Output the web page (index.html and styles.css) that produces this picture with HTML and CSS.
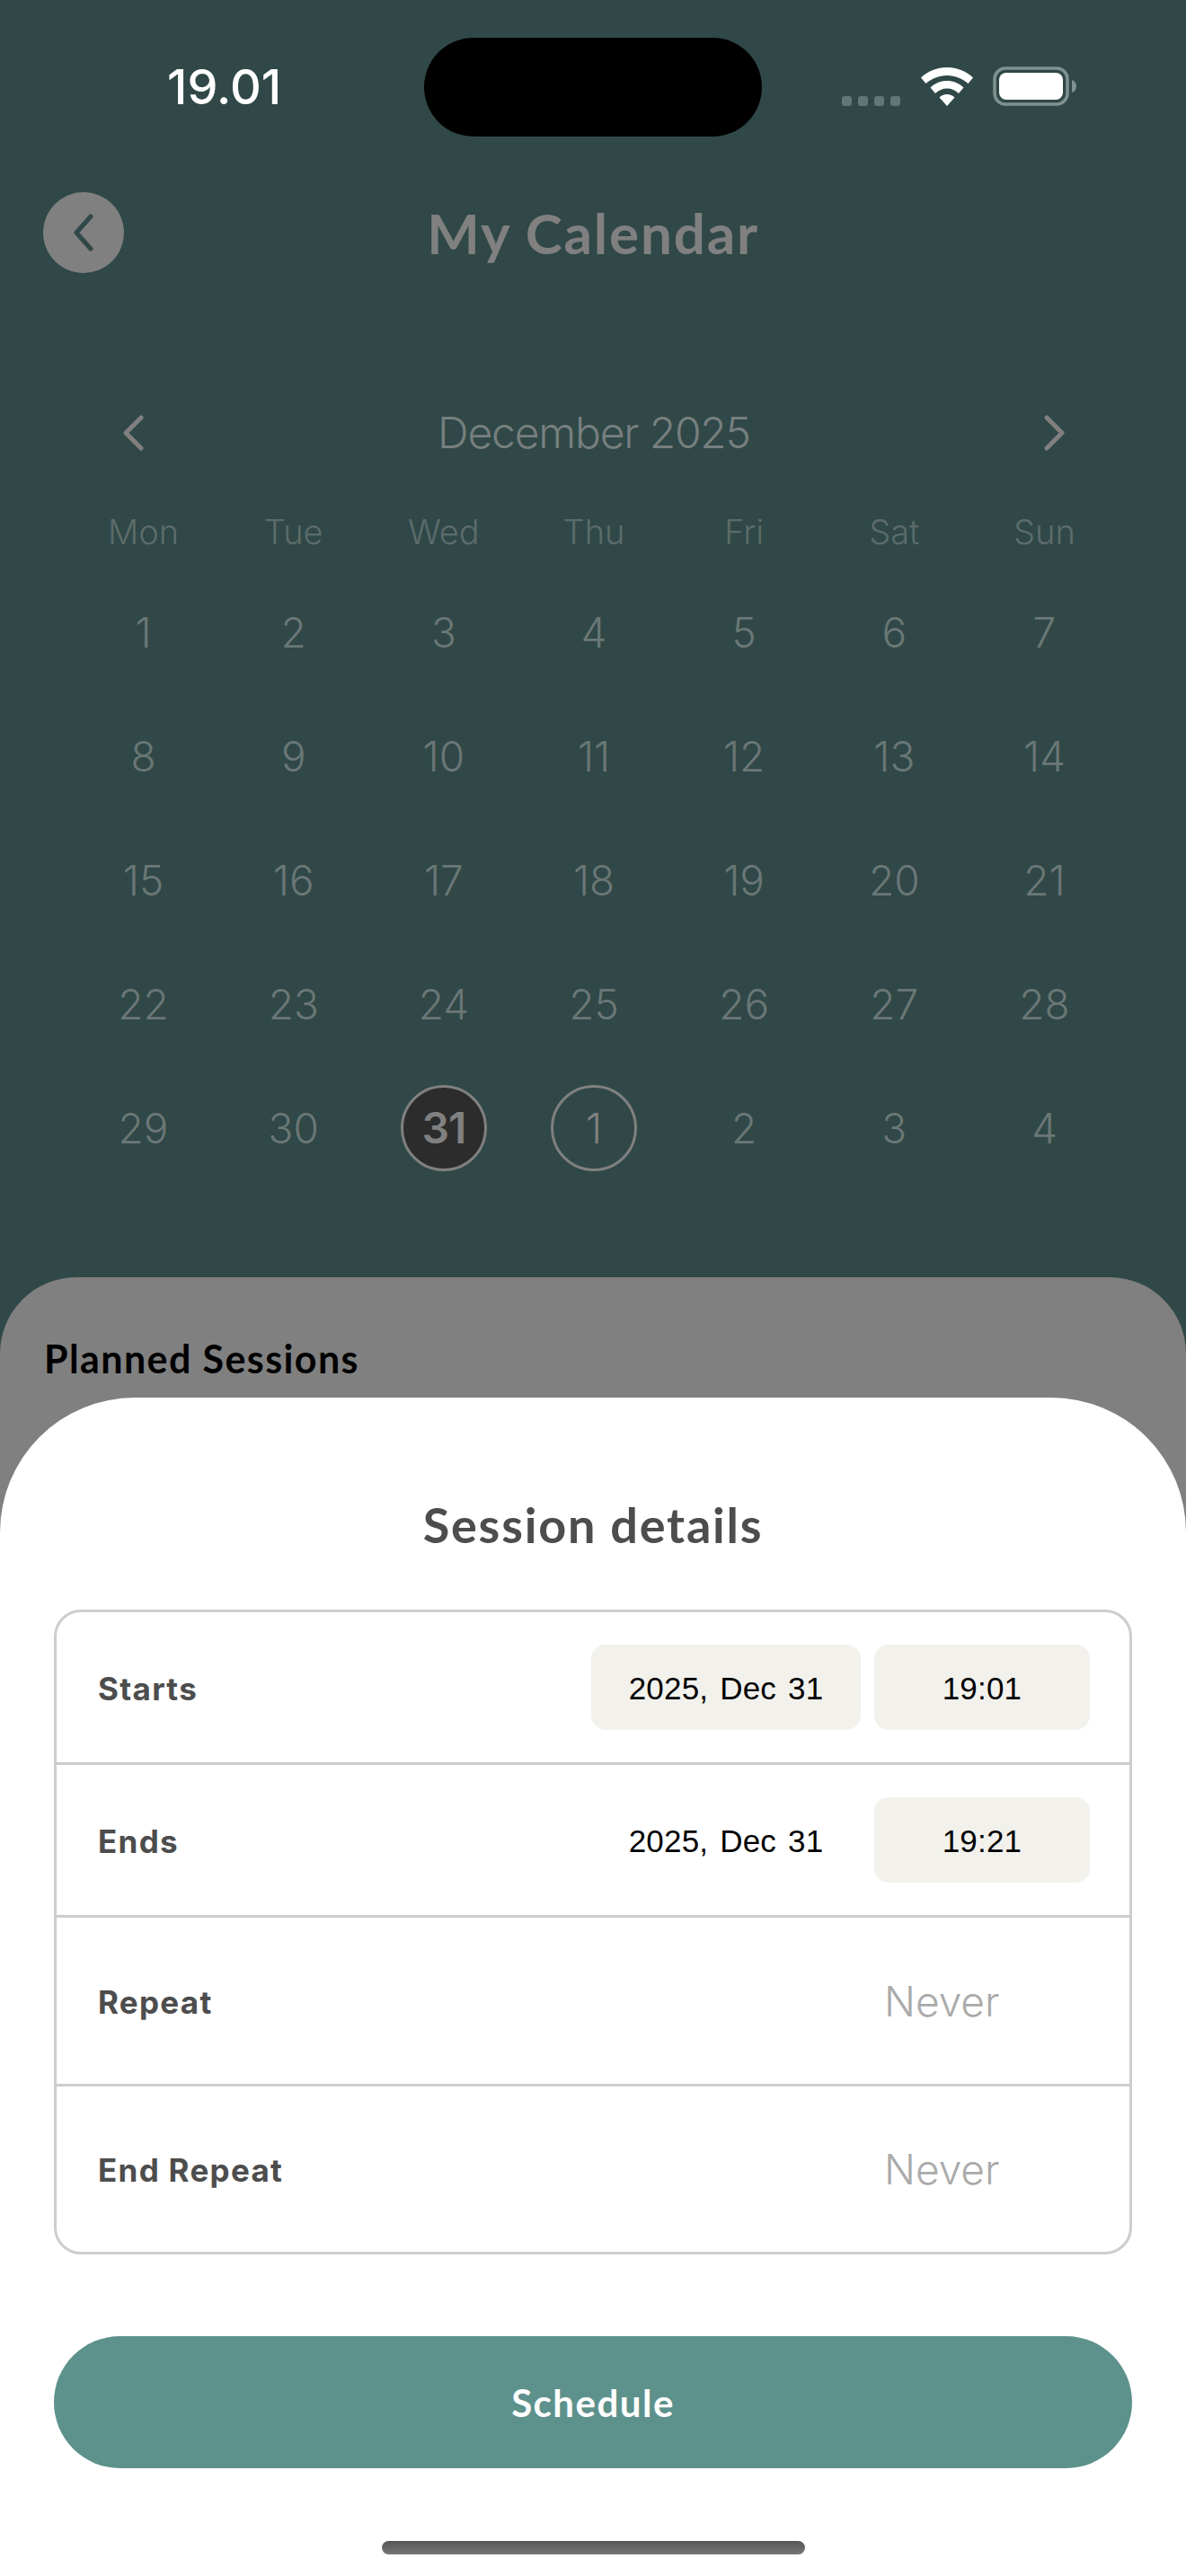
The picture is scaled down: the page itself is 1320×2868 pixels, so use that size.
FILE: index.html
```html
<!DOCTYPE html>
<html lang="en">
<head>
<meta charset="utf-8">
<title>My Calendar</title>
<link rel="stylesheet" href="styles.css">
</head>
<body>
<div class="screen">
  <div class="status">
    <div class="time">19.01</div>
    <div class="island"></div>
    <div class="indicators">
      <div class="signal"><i></i><i></i><i></i><i></i></div>
      <svg class="wifi" width="58" height="43" viewBox="0 0 58 43"><path fill="#fff" d="M29 0C18 0 8 4 0 11.500L5.500 18C12 12.500 20 9 29 9C38 9 46 12.500 52.500 18L58 11.500C50 4 40 0 29 0Z"/><path fill="#fff" d="M29 15C22 15 15.500 17.500 10.500 22.500L16 29C19.500 25.500 24 23.500 29 23.500C34 23.500 38.500 25.500 42 29L47.500 22.500C42.500 17.500 36 15 29 15Z"/><path fill="#fff" d="M29 30C25.500 30 22.500 31.200 20.500 33.500L29 43L37.500 33.500C35.500 31.200 32.500 30 29 30Z"/></svg>
      <svg class="battery" width="94" height="44" viewBox="0 0 94 44"><rect x="2" y="2" width="81" height="40" rx="12" fill="none" stroke="#7f9290" stroke-width="3.500"/><rect x="7" y="7" width="71" height="30" rx="8" fill="#fff"/><path fill="#7f9290" d="M88 15C91 16 93 18.500 93 22C93 25.500 91 28 88 29Z"/></svg>
    </div>
  </div>

  <header class="header">
    <div class="back">
      <svg width="26" height="42" viewBox="0 0 26 42"><path d="M21 3L5 21L21 39" fill="none" stroke="#304847" stroke-width="5" stroke-linecap="round" stroke-linejoin="round"/></svg>
    </div>
    <h1 class="title">My Calendar</h1>
  </header>

  <section class="calendar">
    <div class="month">
      <svg width="26" height="40" viewBox="0 0 26 40"><path d="M22 3L5 20L22 37" fill="none" stroke="#808080" stroke-width="5" stroke-linecap="round" stroke-linejoin="round"/></svg>
      <div class="month-name">December 2025</div>
      <svg width="26" height="40" viewBox="0 0 26 40"><path d="M4 3L21 20L4 37" fill="none" stroke="#808080" stroke-width="5" stroke-linecap="round" stroke-linejoin="round"/></svg>
    </div>
    <div class="weekdays">
      <span>Mon</span><span>Tue</span><span>Wed</span><span>Thu</span><span>Fri</span><span>Sat</span><span>Sun</span>
    </div>
    <div class="days">
      <span>1</span><span>2</span><span>3</span><span>4</span><span>5</span><span>6</span><span>7</span>
      <span>8</span><span>9</span><span>10</span><span>11</span><span>12</span><span>13</span><span>14</span>
      <span>15</span><span>16</span><span>17</span><span>18</span><span>19</span><span>20</span><span>21</span>
      <span>22</span><span>23</span><span>24</span><span>25</span><span>26</span><span>27</span><span>28</span>
      <span>29</span><span>30</span><span class="today"><b>31</b></span><span class="ringed"><b>1</b></span><span>2</span><span>3</span><span>4</span>
    </div>
  </section>

  <section class="panel">
    <h2 class="panel-title">Planned Sessions</h2>
  </section>

  <section class="sheet">
    <h2 class="sheet-title">Session details</h2>
    <div class="card">
      <div class="row">
        <span class="label">Starts</span>
        <div class="values"><span class="pill pill-date">2025, Dec 31</span><span class="pill pill-time">19:01</span></div>
      </div>
      <div class="row">
        <span class="label">Ends</span>
        <div class="values"><span class="pill pill-date plain">2025, Dec 31</span><span class="pill pill-time">19:21</span></div>
      </div>
      <div class="row tall">
        <span class="label">Repeat</span>
        <span class="never">Never</span>
      </div>
      <div class="row tall">
        <span class="label">End Repeat</span>
        <span class="never">Never</span>
      </div>
    </div>
    <button class="schedule">Schedule</button>
    <div class="home"></div>
  </section>
</div>
</body>
</html>
```
FILE: styles.css
```css
* { box-sizing: border-box; }
html, body { margin: 0; padding: 0; }
body { background: #304847; font-family: "Inter", "Liberation Sans", sans-serif; }
.screen { position: relative; width: 1320px; height: 2868px; overflow: hidden; background: #304847; }

.status { display: flex; height: 110px; position: relative; top: 42px; }
.time { width: 472px; padding-left: 186px; font: 500 54px/110px "Inter", sans-serif; color: #fff; letter-spacing: 0; white-space: nowrap; }
.island { width: 376px; height: 110px; border-radius: 55px; background: #000; }
.indicators { display: flex; align-items: flex-end; margin-left: 89px; padding-top: 33px; height: 76px; }
.signal { display: flex; gap: 7px; margin-right: 23px; }
.signal i { display: block; width: 11px; height: 11px; border-radius: 3px; background: #5f7775; }
.wifi { display: block; margin-right: 22px; }
.battery { display: block; }

.header { display: grid; grid-template-columns: 90px 1fr 90px; align-items: center; height: 90px; margin: 103px 48px 0; }
.back { display: flex; align-items: center; justify-content: center; width: 90px; height: 90px; border-radius: 50%; background: #808080; }
.title { margin: 0; text-align: center; font: 700 62px/92px "Lato", sans-serif; color: #808080; letter-spacing: 1.8px; }

.calendar { padding: 149px 74px 0 76px; }
.month { display: flex; align-items: center; justify-content: space-between; height: 60px; padding: 0 59px 0 59px; }
.month-name { font: 300 48px/60px "Inter", sans-serif; color: #777f7f; letter-spacing: -1.2px; }
.weekdays { display: grid; grid-template-columns: repeat(7, 1fr); height: 60px; margin-top: 50px; text-align: center; font: 300 38px/60px "Inter", sans-serif; color: #5c6c6b; }
.days { display: grid; grid-template-columns: repeat(7, 1fr); grid-auto-rows: 138px; margin-top: 13px; text-align: center; font: 300 46px/138px "Inter", sans-serif; color: #6a7776; }
.days span { display: flex; align-items: center; justify-content: center; }
.days b { display: block; width: 96px; height: 96px; border-radius: 50%; border: 3px solid #808080; font: inherit; line-height: 90px; }
.today b { background: #2c2c2c; color: #808080; font-weight: 600; font-size: 48px; letter-spacing: -1px; }
.ringed b { color: #808080; }

.panel { position: absolute; left: 0; right: 0; top: 1422px; bottom: 0; border-radius: 85px 85px 0 0; background: #808080; padding: 66px 49px 0; }
.panel-title { margin: 0; font: 700 43px/50px "Lato", sans-serif; color: #000; letter-spacing: 1.4px; }

.sheet { position: absolute; left: 0; right: 0; top: 1556px; bottom: 0; border-radius: 150px 150px 0 0; background: #fff; padding: 112px 60px 0; }
.sheet-title { margin: 0; text-align: center; font: 700 54px/60px "Lato", sans-serif; color: #4d4d4d; letter-spacing: 1.8px; }
.card { margin-top: 64px; border: 3px solid #cdcdcd; border-radius: 30px; }
.row { display: flex; align-items: center; justify-content: space-between; height: 170px; padding: 0 46px; border-bottom: 3px solid #cdcdcd; }
.tall { height: 188px; }
.row:last-child { height: 184px; border-bottom: 0; }
.label { position: relative; top: 1px; font: 700 35px/42px "Inter", sans-serif; color: #4d4d4d; letter-spacing: 1.3px; }
.values { display: flex; gap: 15px; margin-right: -2px; }
.pill { display: block; height: 95px; border-radius: 16px; background: #f2f1ec; text-align: center; font: 400 35px/97px "Liberation Sans", sans-serif; color: #000; letter-spacing: 0.2px; }
.pill-date { width: 300px; word-spacing: 3px; }
.pill-time { width: 240px; }
.plain { background: transparent; }
.never { width: 130px; margin-right: 97px; font: 300 46px/64px "Inter", sans-serif; color: #aaa; white-space: nowrap; }
.schedule { display: block; width: 1200px; height: 147px; margin-top: 91px; border: 0; border-radius: 74px; background: #5d918c; color: #fff; font: 700 42px/149px "Lato", sans-serif; letter-spacing: 1.5px; padding: 0; }
.home { width: 471px; height: 15px; margin: 81px auto 0; border-radius: 8px; background: linear-gradient(#555, #777); }
```
